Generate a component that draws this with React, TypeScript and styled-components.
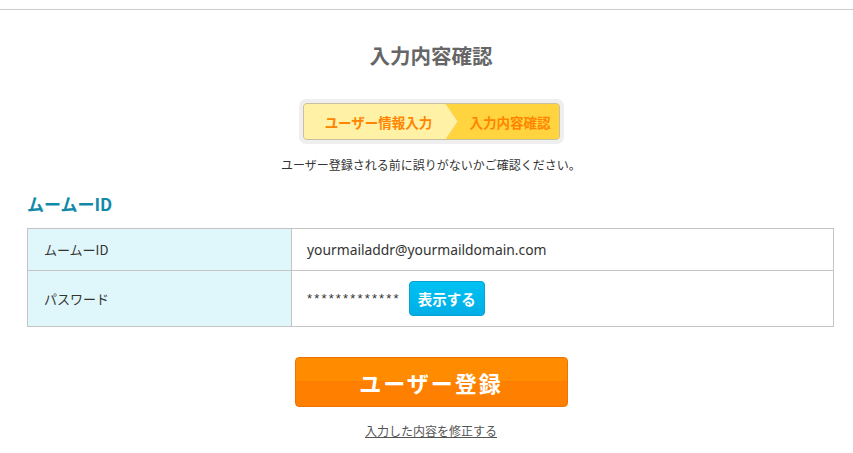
import React from "react";
import styled, { createGlobalStyle } from "styled-components";

const GlobalStyle = createGlobalStyle`
  html, body { margin: 0; padding: 0; background: #fff; }
  body {
    font-family: "Liberation Sans", "Noto Sans CJK JP", sans-serif;
    color: #333;
  }
`;

const TopBar = styled.div`
  height: 9px;
  border-bottom: 1px solid #cccccc;
`;

const Main = styled.main`
  padding: 0 18px 0 27px;
  display: flex;
  flex-direction: column;
`;

const Title = styled.h1`
  margin: 30px 0 0;
  font-size: 20.5px;
  line-height: 30px;
  font-weight: bold;
  color: #666;
  text-align: center;
  font-family: "Noto Sans CJK JP", sans-serif;
`;

const StepOuter = styled.div`
  align-self: center;
  margin-top: 29px;
  padding: 4px;
  background: #efefef;
  border-radius: 7px;
`;

const StepBar = styled.ol`
  list-style: none;
  margin: 0;
  padding: 0;
  display: flex;
  height: 35px;
  border: 1px solid #c8c0a0;
  border-radius: 4px;
  overflow: hidden;
  background: #ffd43e;
`;

const Step = styled.li<{ $active?: boolean; $w: number }>`
  position: relative;
  width: ${(p) => p.$w}px;
  box-sizing: border-box;
  display: flex;
  align-items: center;
  justify-content: ${(p) => (p.$active ? "flex-end" : "center")};
  padding: ${(p) => (p.$active ? "0 8px 0 0" : "0 0 0 8px")};
  font-family: "Noto Sans CJK JP", sans-serif;
  font-size: 13.5px;
  font-weight: bold;
  color: #ff8500;
  background: ${(p) => (p.$active ? "#ffd43e" : "#fff1a6")};
  z-index: ${(p) => (p.$active ? 0 : 1)};

  ${(p) =>
    !p.$active &&
    `
    &::before, &::after {
      content: "";
      position: absolute;
      top: 0;
      bottom: 0;
      clip-path: polygon(0 0, 100% 50%, 0 100%);
    }
    &::before {
      right: -12px;
      width: 12px;
      background: #f4eccc;
    }
    &::after {
      right: -11px;
      width: 11px;
      background: #fff1a6;
    }
  `}
`;

const Lead = styled.p`
  margin: 12px 0 0;
  font-size: 12px;
  line-height: 18px;
  text-align: center;
  color: #333;
  font-family: "Noto Sans CJK JP", sans-serif;
`;

const SectionHead = styled.h2`
  margin: 18px 0 0;
  font-size: 17px;
  line-height: 24px;
  font-weight: bold;
  color: #1189a8;
  font-family: "Noto Sans CJK JP", sans-serif;
`;

const Table = styled.table`
  margin-top: 12px;
  width: 807px;
  border-collapse: collapse;
  font-size: 14px;
`;

const Th = styled.th`
  width: 264px;
  box-sizing: border-box;
  text-align: left;
  font-weight: normal;
  background: #dff6fa;
  border: 1px solid #c4c4c4;
  padding: 0 16px;
  font-size: 13px;
  color: #333;
  font-family: "Noto Sans CJK JP", sans-serif;
`;

const Td = styled.td<{ $h: number }>`
  height: ${(p) => p.$h}px;
  border: 1px solid #c4c4c4;
  padding: 0 15px;
  color: #333;
  font-size: 13.85px;
  font-family: "Noto Sans", "Noto Sans CJK JP", sans-serif;
`;

const ValueRow = styled.div`
  display: flex;
  align-items: center;
  gap: 8px;
`;

const Mask = styled.span`
  font-size: 13px;
  letter-spacing: 2.15px;
  font-family: "Liberation Sans", sans-serif;
`;

const ShowButton = styled.button`
  height: 35px;
  padding: 0 8px;
  border: 1px solid #06a2d6;
  border-radius: 4px;
  background: linear-gradient(#00c2f2, #00aee6);
  color: #fff;
  font-family: "Noto Sans CJK JP", sans-serif;
  font-weight: bold;
  font-size: 14.5px;
  cursor: pointer;
`;

const SubmitButton = styled.button`
  align-self: center;
  margin-top: 30px;
  width: 273px;
  height: 50px;
  border: 1px solid #f07200;
  border-radius: 4px;
  background: linear-gradient(#ff8c00 0%, #ff8c00 48%, #ff7f00 48%, #ff7f00 100%);
  color: #fff;
  font-family: "Noto Sans CJK JP", sans-serif;
  font-weight: bold;
  font-size: 22px;
  letter-spacing: 2px;
  cursor: pointer;
`;

const BackLink = styled.a`
  align-self: center;
  margin-top: 15px;
  font-size: 12px;
  line-height: 18px;
  color: #555;
  text-decoration: underline;
  font-family: "Noto Sans CJK JP", sans-serif;
`;

export default function App() {
  return (
    <>
      <GlobalStyle />
      <TopBar />
      <Main>
        <Title>入力内容確認</Title>
        <StepOuter>
          <StepBar>
            <Step $w={142}>ユーザー情報入力</Step>
            <Step $active $w={113}>入力内容確認</Step>
          </StepBar>
        </StepOuter>
        <Lead>ユーザー登録される前に誤りがないかご確認ください。</Lead>
        <SectionHead>ムームーID</SectionHead>
        <Table>
          <tbody>
            <tr>
              <Th>ムームーID</Th>
              <Td $h={41}>yourmailaddr@yourmaildomain.com</Td>
            </tr>
            <tr>
              <Th>パスワード</Th>
              <Td $h={55}>
                <ValueRow>
                  <Mask>*************</Mask>
                  <ShowButton type="button">表示する</ShowButton>
                </ValueRow>
              </Td>
            </tr>
          </tbody>
        </Table>
        <SubmitButton type="button">ユーザー登録</SubmitButton>
        <BackLink href="#">入力した内容を修正する</BackLink>
      </Main>
    </>
  );
}
